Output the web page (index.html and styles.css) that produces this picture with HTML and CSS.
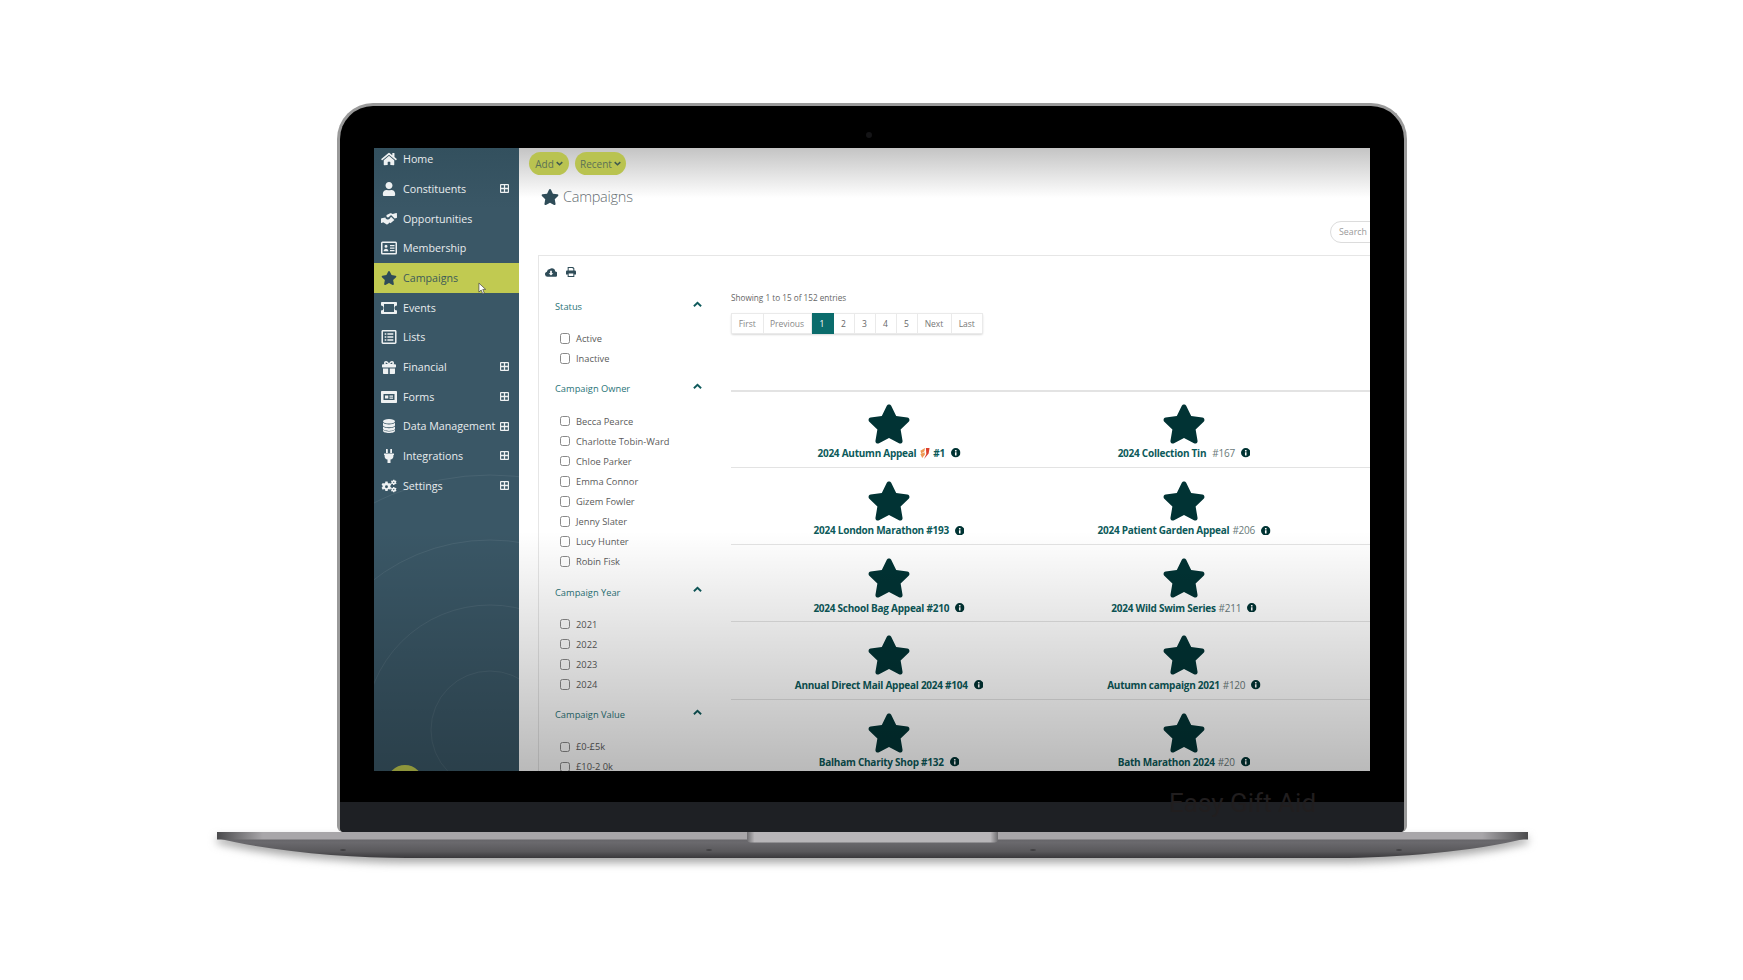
FILE: index.html
```html
<!DOCTYPE html>
<html lang="en">
<head>
<meta charset="utf-8">
<title>Campaigns</title>
<link rel="stylesheet" href="styles.css">
</head>
<body>
<svg class="defs" width="0" height="0" aria-hidden="true">
  <symbol id="i-star" viewBox="0 0 576 512"><path d="M259.3 17.8L194 150.2 47.9 171.5c-26.2 3.8-36.7 36.1-17.7 54.6l105.7 103-25 145.5c-4.5 26.3 23.2 46 46.4 33.7L288 439.6l130.7 68.7c23.2 12.2 50.9-7.4 46.4-33.7l-25-145.5 105.7-103c19-18.5 8.5-50.8-17.7-54.6L382 150.2 316.7 17.8c-11.7-23.6-45.6-23.9-57.4 0z"/></symbol>
  <symbol id="i-home" viewBox="0 0 576 512"><path d="M280.37 148.26L96 300.11V464a16 16 0 0 0 16 16l112.06-.29a16 16 0 0 0 15.92-16V368a16 16 0 0 1 16-16h64a16 16 0 0 1 16 16v95.64a16 16 0 0 0 16 16.05L464 480a16 16 0 0 0 16-16V300L295.67 148.26a12.19 12.19 0 0 0-15.3 0zM571.6 251.47L488 182.56V44.05a12 12 0 0 0-12-12h-56a12 12 0 0 0-12 12v72.61L318.47 43a48 48 0 0 0-61 0L4.34 251.47a12 12 0 0 0-1.6 16.9l25.5 31A12 12 0 0 0 45.15 301l235.22-193.74a12.19 12.19 0 0 1 15.3 0L530.9 301a12 12 0 0 0 16.9-1.6l25.5-31a12 12 0 0 0-1.7-16.93z"/></symbol>
  <symbol id="i-user" viewBox="0 0 448 512"><path d="M224 256c70.7 0 128-57.3 128-128S294.7 0 224 0 96 57.3 96 128s57.3 128 128 128zm89.6 32h-16.7c-22.2 10.2-46.9 16-72.9 16s-50.6-5.8-72.9-16h-16.7C60.2 288 0 348.2 0 422.4V464c0 26.5 21.5 48 48 48h352c26.5 0 48-21.5 48-48v-41.6c0-74.2-60.2-134.4-134.4-134.4z"/></symbol>
  <symbol id="i-hands" viewBox="0 0 16 12"><path d="M5.600 1.900 8.700.4c.6-.3 1.300-.3 1.900 0l1.100.6L15.200 0c.3 0 .6.100.7.400l.1 3.800c0 .3-.2.600-.5.700l-1.900.6-3-3.100c-.3-.3-.8-.3-1.100 0L7.900 4.100c-.7.600-1.700.4-2.200-.3-.4-.6-.4-1.300-.1-1.900zM10 3.700l3.400 3.400-3.900 3.100-.8-.7-1.700 1.600c-.5.500-1.200.4-1.700.1L2.200 9.300.6 9.900C.3 10 0 9.800 0 9.400V6c0-.4.200-.6.500-.7l3.900-.9c.1 1 .9 1.800 2 2 1 .2 1.900-.2 2.500-.9L10 3.700z"/></symbol>
  <symbol id="i-idcard" viewBox="0 0 16 13"><path fill-rule="evenodd" d="M1.500 0h13A1.500 1.500 0 0 1 16 1.500v10a1.500 1.500 0 0 1-1.500 1.500h-13A1.500 1.500 0 0 1 0 11.500v-10A1.500 1.500 0 0 1 1.500 0zM1.500 1.500v10h13v-10h-13zM5 3.200a1.500 1.500 0 1 1 0 3 1.500 1.500 0 0 1 0-3zM2.600 9.700c0-1.500 1-2.500 2.400-2.500s2.400 1 2.400 2.500H2.600zM9 3.500h4.500v1.300H9zM9 6h4.500v1.300H9zM9 8.400h4.500v1.300H9z"/></symbol>
  <symbol id="i-ticket" viewBox="0 0 16 12"><path fill-rule="evenodd" d="M.8 0h14.400c.4 0 .8.400.8.800v2.700a2.500 2.500 0 0 0 0 5v2.700c0 .4-.4.800-.8.800H.8c-.4 0-.8-.4-.8-.8V8.500a2.500 2.500 0 0 0 0-5V.8C0 .4.400 0 .8 0zM3 2v8h10V2H3z"/></symbol>
  <symbol id="i-list" viewBox="0 0 14 13"><path fill-rule="evenodd" d="M1.300 0h11.400C13.400 0 14 .6 14 1.300v10.400c0 .7-.6 1.300-1.300 1.300H1.300C.6 13 0 12.400 0 11.700V1.300C0 .6.600 0 1.300 0zM1.400 1.400v10.200h11.200V1.400H1.400zM3 3h1.500v1.400H3zM5.500 3H11v1.400H5.500zM3 5.800h1.500v1.400H3zM5.500 5.800H11v1.400H5.500zM3 8.600h1.500V10H3zM5.500 8.600H11V10H5.500z"/></symbol>
  <symbol id="i-gift" viewBox="0 0 14 14"><path d="M1 8.500h5.200V14H2c-.6 0-1-.4-1-1V8.500zm6.800 0H13V13c0 .6-.4 1-1 1H7.800V8.500zM4 1c1.400 0 2.300 1.100 3 2.400C7.700 2.100 8.600 1 10 1c1.200 0 2 .8 2 1.900 0 .5-.1.900-.4 1.300h1.500c.5 0 .9.400.9.900v1.700c0 .4-.3.700-.7.700H.7C.3 7.500 0 7.200 0 6.800V5.100c0-.5.400-.9.900-.9h1.500C2.100 3.800 2 3.400 2 2.900 2 1.800 2.800 1 4 1zm0 1.500c-.3 0-.5.200-.5.500 0 .5.400 1 1 1h1.400C5.300 3 4.700 2.500 4 2.500zm6 0c-.7 0-1.300.5-1.900 1.500h1.400c.6 0 1-.5 1-1 0-.3-.2-.5-.5-.5z"/></symbol>
  <symbol id="i-form" viewBox="0 0 16 12"><path fill-rule="evenodd" d="M1 0h14c.6 0 1 .4 1 1v10c0 .6-.4 1-1 1H1c-.6 0-1-.4-1-1V1c0-.6.400-1 1-1zM2.500 3v6h11V3h-11zM4 4.500h3.300v3H4zM8.500 4.500H12v1.200H8.500zM8.500 6.500H12v1.200H8.500z"/></symbol>
  <symbol id="i-db" viewBox="0 0 12 14"><ellipse cx="6" cy="2.300" rx="6" ry="2.300"/><path d="M0 3.800C1.200 5 3.600 5.500 6 5.500s4.800-.5 6-1.700v2.400C12 7.400 9.300 8.300 6 8.300S0 7.400 0 6.200V3.800zM0 7.500C1.200 8.600 3.600 9.200 6 9.200s4.800-.6 6-1.700v2.300c0 1.200-2.700 2.100-6 2.100s-6-.9-6-2.100V7.500zM0 10.800C1.200 12 3.600 12.500 6 12.500s4.800-.5 6-1.700v.9C12 13 9.300 14 6 14s-6-1-6-2.300v-.9z"/></symbol>
  <symbol id="i-plug" viewBox="0 0 10 14"><path d="M2 0h1.300c.3 0 .5.200.5.500V4H2V0zM6.500 0H8v4H6.200V.5c0-.3.100-.5.300-.5zM.4 4.500h9.200c.2 0 .4.200.4.400v.8c0 .2-.2.400-.4.400h-.2v1.100c0 1.700-1.200 3.100-2.900 3.400V14H3.500v-3.400C1.800 10.300.6 8.900.6 7.200V6.100H.4C.2 6.100 0 5.900 0 5.700v-.8c0-.2.200-.4.400-.4z"/></symbol>
  <symbol id="i-cogs" viewBox="0.500 0.500 16.500 13">
    <path fill-rule="evenodd" d="M5 2.400h2.300l.3 1.500c.4.100.7.300 1 .5l1.400-.6 1.200 1.900-1.100 1c.1.400.1.800 0 1.200l1.100 1-1.200 1.900-1.400-.6c-.3.200-.6.400-1 .5l-.3 1.500H5l-.3-1.500c-.4-.1-.7-.3-1-.5l-1.400.6-1.200-1.900 1.100-1a3 3 0 0 1 0-1.200l-1.100-1 1.200-1.900 1.400.6c.3-.2.600-.4 1-.5L5 2.400zM6.150 6.200a1.500 1.500 0 1 0 0 3 1.500 1.500 0 0 0 0-3z"/>
    <path fill-rule="evenodd" d="M13 .5h1.300l.2.800.6.300.8-.3.600 1-.6.600v.6l.6.600-.6 1-.8-.3-.6.300-.2.800H13l-.2-.8-.6-.3-.8.300-.6-1 .6-.6v-.6l-.6-.6.600-1 .8.300.6-.3L13 .5zm.65 2a.7.700 0 1 0 0 1.400.7.700 0 0 0 0-1.400zM13 8h1.300l.2.800.6.300.8-.3.600 1-.6.600v.6l.6.600-.6 1-.8-.3-.6.300-.2.800H13l-.2-.8-.6-.3-.8.300-.6-1 .6-.6v-.6l-.6-.6.600-1 .8.300.6-.3L13 8zm.65 2a.7.700 0 1 0 0 1.400.7.700 0 0 0 0-1.400z"/>
  </symbol>
  <symbol id="i-plus" viewBox="0 0 10 10"><path fill-rule="evenodd" d="M1 0h8c.6 0 1 .4 1 1v8c0 .6-.4 1-1 1H1c-.6 0-1-.4-1-1V1c0-.6.400-1 1-1zM1.300 1.300v3h3v-3h-3zM5.700 1.300v3h3v-3h-3zM1.300 5.700v3h3v-3h-3zM5.700 5.700v3h3v-3h-3z"/></symbol>
  <symbol id="i-up" viewBox="0 0 10 7"><path d="M1 5.500 5 1.700l4 3.800" fill="none" stroke="currentColor" stroke-width="2.100"/></symbol>
  <symbol id="i-down" viewBox="0 0 10 7"><path d="M1 1.500 5 5.300l4-3.800" fill="none" stroke="currentColor" stroke-width="2.200"/></symbol>
  <symbol id="i-cloud" viewBox="0 0 14 11"><path fill-rule="evenodd" d="M3 11a3 3 0 0 1-.8-5.900A3.600 3.600 0 0 1 5.600 2 4 4 0 0 1 12 4.800 3.100 3.100 0 0 1 11 11H3zM6 4v3H4.300L7 9.700 9.700 7H8V4H6z"/></symbol>
  <symbol id="i-print" viewBox="0 0 12 12"><path fill-rule="evenodd" d="M2 0h6.500L10 1.500V4.200h.5c.8 0 1.500.7 1.500 1.500V9h-2v3H2V9H0V5.700c0-.8.700-1.500 1.500-1.500H2V0zm1.200 1.200v3h5.600V2H8V1.200H3.200zm0 6.500v3.100h5.600V7.700H3.200z"/></symbol>
  <symbol id="i-info" viewBox="0 0 12 12"><path fill-rule="evenodd" d="M6 0a6 6 0 1 1 0 12A6 6 0 0 1 6 0zM5 2.500v1.800h2V2.500H5zM5 5.300v4.200h2V5.300H5z"/></symbol>
  <symbol id="i-ribbon" viewBox="0 0 12 12"><path fill="#ee9a55" d="M1.500 3 6.500 0 6 3.500 2.500 6zM1.500 6.500 6 4.500l.5 2.500-3 4z"/><path fill="#dc3e2c" d="M7.500 0H11.500L10.500 6 5.500 12 8 6.500z"/></symbol>
</svg>

<div class="device">
  <div class="lid">
    <span class="camera"></span>
    <div class="screen">
      <nav class="sidebar">
        <svg class="rings" viewBox="0 0 145 623" aria-hidden="true">
          <g fill="none" stroke="#fff" stroke-opacity=".07">
            <circle cx="116" cy="582" r="59"/>
            <circle cx="116" cy="582" r="125"/>
            <circle cx="116" cy="582" r="190"/>
            <circle cx="116" cy="582" r="255"/>
          </g>
          <circle cx="31" cy="635" r="18" fill="#c2cc50"/>
        </svg>
        <ul class="menu">
          <li class="row"><svg class="ico"><use href="#i-home"/></svg><span>Home</span></li>
          <li class="row"><svg class="ico"><use href="#i-user"/></svg><span>Constituents</span><svg class="plus"><use href="#i-plus"/></svg></li>
          <li class="row"><svg class="ico"><use href="#i-hands"/></svg><span>Opportunities</span></li>
          <li class="row"><svg class="ico"><use href="#i-idcard"/></svg><span>Membership</span></li>
          <li class="row active"><svg class="ico"><use href="#i-star"/></svg><span>Campaigns</span></li>
          <li class="row"><svg class="ico"><use href="#i-ticket"/></svg><span>Events</span></li>
          <li class="row"><svg class="ico"><use href="#i-list"/></svg><span>Lists</span></li>
          <li class="row"><svg class="ico"><use href="#i-gift"/></svg><span>Financial</span><svg class="plus"><use href="#i-plus"/></svg></li>
          <li class="row"><svg class="ico"><use href="#i-form"/></svg><span>Forms</span><svg class="plus"><use href="#i-plus"/></svg></li>
          <li class="row"><svg class="ico"><use href="#i-db"/></svg><span>Data Management</span><svg class="plus"><use href="#i-plus"/></svg></li>
          <li class="row"><svg class="ico"><use href="#i-plug"/></svg><span>Integrations</span><svg class="plus"><use href="#i-plus"/></svg></li>
          <li class="row"><svg class="ico"><use href="#i-cogs"/></svg><span>Settings</span><svg class="plus"><use href="#i-plus"/></svg></li>
        </ul>
      </nav>
      <main class="main">
        <div class="topbar">
          <button class="pill pill-add">Add <svg class="caret"><use href="#i-down"/></svg></button>
          <button class="pill pill-recent">Recent <svg class="caret"><use href="#i-down"/></svg></button>
        </div>
        <h1 class="title"><svg class="title-star"><use href="#i-star"/></svg>Campaigns</h1>
        <div class="search">Search</div>
        <section class="card">
          <aside class="filters">
            <div class="tools">
              <svg class="tool-cloud"><use href="#i-cloud"/></svg>
              <svg class="tool-print"><use href="#i-print"/></svg>
            </div>
            <div class="group">
              <div class="group-head"><span>Status</span><svg class="chev"><use href="#i-up"/></svg></div>
              <label class="opt"><input type="checkbox">Active</label>
              <label class="opt"><input type="checkbox">Inactive</label>
            </div>
            <div class="group">
              <div class="group-head"><span>Campaign Owner</span><svg class="chev"><use href="#i-up"/></svg></div>
              <label class="opt"><input type="checkbox">Becca Pearce</label>
              <label class="opt"><input type="checkbox">Charlotte Tobin-Ward</label>
              <label class="opt"><input type="checkbox">Chloe Parker</label>
              <label class="opt"><input type="checkbox">Emma Connor</label>
              <label class="opt"><input type="checkbox">Gizem Fowler</label>
              <label class="opt"><input type="checkbox">Jenny Slater</label>
              <label class="opt"><input type="checkbox">Lucy Hunter</label>
              <label class="opt"><input type="checkbox">Robin Fisk</label>
            </div>
            <div class="group">
              <div class="group-head"><span>Campaign Year</span><svg class="chev"><use href="#i-up"/></svg></div>
              <label class="opt"><input type="checkbox">2021</label>
              <label class="opt"><input type="checkbox">2022</label>
              <label class="opt"><input type="checkbox">2023</label>
              <label class="opt"><input type="checkbox">2024</label>
            </div>
            <div class="group">
              <div class="group-head"><span>Campaign Value</span><svg class="chev"><use href="#i-up"/></svg></div>
              <label class="opt"><input type="checkbox">£0-£5k</label>
              <label class="opt"><input type="checkbox">£10-2 0k</label>
            </div>
          </aside>
          <div class="results">
            <p class="showing">Showing 1 to 15 of 152 entries</p>
            <div class="pager">
              <a class="pg pg-first">First</a><a class="pg pg-prev">Previous</a><a class="pg pg-num current">1</a><a class="pg pg-num">2</a><a class="pg pg-num">3</a><a class="pg pg-num">4</a><a class="pg pg-num">5</a><a class="pg pg-next">Next</a><a class="pg pg-last">Last</a>
            </div>
            <div class="list">
              <div class="list-row">
                <div class="item"><svg class="big-star"><use href="#i-star"/></svg><div class="name">2024 Autumn Appeal <svg class="ribbon"><use href="#i-ribbon"/></svg> #1<svg class="info"><use href="#i-info"/></svg></div></div>
                <div class="item"><svg class="big-star"><use href="#i-star"/></svg><div class="name">2024 Collection Tin <span class="ref ref-gap">#167</span><svg class="info"><use href="#i-info"/></svg></div></div>
              </div>
              <div class="list-row">
                <div class="item"><svg class="big-star"><use href="#i-star"/></svg><div class="name">2024 London Marathon #193<svg class="info"><use href="#i-info"/></svg></div></div>
                <div class="item"><svg class="big-star"><use href="#i-star"/></svg><div class="name">2024 Patient Garden Appeal <span class="ref">#206</span><svg class="info"><use href="#i-info"/></svg></div></div>
              </div>
              <div class="list-row">
                <div class="item"><svg class="big-star"><use href="#i-star"/></svg><div class="name">2024 School Bag Appeal #210<svg class="info"><use href="#i-info"/></svg></div></div>
                <div class="item"><svg class="big-star"><use href="#i-star"/></svg><div class="name">2024 Wild Swim Series <span class="ref">#211</span><svg class="info"><use href="#i-info"/></svg></div></div>
              </div>
              <div class="list-row">
                <div class="item"><svg class="big-star"><use href="#i-star"/></svg><div class="name">Annual Direct Mail Appeal 2024 #104<svg class="info"><use href="#i-info"/></svg></div></div>
                <div class="item"><svg class="big-star"><use href="#i-star"/></svg><div class="name">Autumn campaign 2021 <span class="ref">#120</span><svg class="info"><use href="#i-info"/></svg></div></div>
              </div>
              <div class="list-row">
                <div class="item"><svg class="big-star"><use href="#i-star"/></svg><div class="name">Balham Charity Shop #132<svg class="info"><use href="#i-info"/></svg></div></div>
                <div class="item"><svg class="big-star"><use href="#i-star"/></svg><div class="name">Bath Marathon 2024 <span class="ref">#20</span><svg class="info"><use href="#i-info"/></svg></div></div>
              </div>
            </div>
          </div>
        </section>
      </main>
      <div class="shade"></div>
      <svg class="cursor" viewBox="0 0 10 14" aria-hidden="true"><path d="M1 1v10l2.500-2.300L5.300 13l1.700-.8L5.300 8h3.200z" fill="#fff" stroke="#333" stroke-width=".7"/></svg>
    </div>
    <div class="chin"></div>
    <div class="watermark">Easy Gift Aid</div>
  </div>
  <svg class="base" viewBox="0 0 1311 40" aria-hidden="true">
    <defs>
      <linearGradient id="g-strip" x1="0" x2="1" y1="0" y2="0">
        <stop offset="0" stop-color="#4a4a4c"/><stop offset=".035" stop-color="#a8a6a9"/>
        <stop offset=".965" stop-color="#a8a6a9"/><stop offset="1" stop-color="#4a4a4c"/>
      </linearGradient>
      <linearGradient id="g-body" x1="0" x2="0" y1="0" y2="1">
        <stop offset="0" stop-color="#5e5d60"/><stop offset=".4" stop-color="#6a696d"/>
        <stop offset=".75" stop-color="#59585b"/><stop offset="1" stop-color="#3a393c"/>
      </linearGradient>
      <linearGradient id="g-notch" x1="0" x2="1" y1="0" y2="0">
        <stop offset="0" stop-color="#6e6d70"/><stop offset=".03" stop-color="#b8b6b9"/>
        <stop offset=".97" stop-color="#b8b6b9"/><stop offset="1" stop-color="#6e6d70"/>
      </linearGradient>
      <filter id="f-blur" x="-5%" y="-50%" width="110%" height="250%"><feGaussianBlur stdDeviation="4"/></filter>
    </defs>
    <path d="M0 6C50 19 130 26 190 26H1120C1180 26 1260 19 1311 6V0H0z" transform="translate(0 5)" fill="#a8a8a8" filter="url(#f-blur)"/>
    <path d="M0 6C50 19 130 26 190 26H1120C1180 26 1260 19 1311 6V0H0z" fill="url(#g-body)"/>
    <rect width="1311" height="7.500" fill="url(#g-strip)"/>
    <path d="M530 0H781V7C781 10 779 10.500 775 10.500H536C532 10.500 530 10 530 7z" fill="url(#g-notch)"/>
    <g fill="#38373a"><ellipse cx="126" cy="18" rx="3" ry=".8"/><ellipse cx="492" cy="18" rx="3" ry=".8"/><ellipse cx="816" cy="18" rx="3" ry=".8"/><ellipse cx="1182" cy="18" rx="3" ry=".8"/></g>
  </svg>
</div>
</body>
</html>
```
FILE: styles.css
```css
* { box-sizing: border-box; }
html, body { margin: 0; height: 100%; }
body { background: #fff; overflow: hidden; font-family: "Open Sans", "Liberation Sans", sans-serif; }
.defs { position: absolute; }

.device { width: 1311px; margin: 103px 0 0 217px; }
.lid {
  position: relative; width: 1070px; height: 729px; margin-left: 120px;
  padding: 42px 34px 0; background: #000;
  border: 3px solid #9a9a9a; border-bottom: 0; border-radius: 36px 36px 6px 6px;
}
.camera { position: absolute; top: 26px; left: 526px; width: 6px; height: 6px; border-radius: 50%; background: #141416; }
.screen { position: relative; display: flex; width: 996px; height: 623px; overflow: hidden; background: #fff; }
.chin { height: 30px; margin: 31px -34px 0; background: #1e2024; border-radius: 0 0 4px 4px; }
.watermark { position: absolute; left: 829px; top: 682px; font: 400 26px/30px Roboto, sans-serif; color: #211e1f; white-space: nowrap; }
.base { display: block; width: 1311px; height: 40px; overflow: visible; }

.sidebar { position: relative; flex: 0 0 145px; background: linear-gradient(#33505e, #3a5766 60px); overflow: hidden; }
.rings { position: absolute; left: 0; top: 0; width: 145px; height: 623px; }
.menu { position: relative; list-style: none; margin: -3.500px 0 0; padding: 0; }
.row { display: flex; align-items: center; height: 29.67px; padding: 0 10px 0 7px; color: #e8ecee; font-size: 10.700px; white-space: nowrap; }
.row .ico { flex: 0 0 16px; width: 16px; height: 14px; margin-right: 6px; fill: #eef1f2; }
.row .plus { width: 9px; height: 9px; margin-left: auto; fill: #eef1f2; }
.row.active { background: #c1ca51; color: #3d5b58; }
.row.active .ico { fill: #2f4c58; }

.main { flex: 1; min-width: 0; display: flex; flex-direction: column; padding-top: 4px; background: linear-gradient(#c4c4c4, #fff 50px); color: #555; }
.topbar { display: flex; gap: 6px; margin-left: 10px; height: 23px; }
.pill { display: flex; align-items: center; justify-content: center; gap: 2px; height: 23px; padding: 0; border: 0; border-radius: 12px; background: #b9c350; color: #5b7155; font: 400 10px "Open Sans", sans-serif; }
.pill-add { width: 40px; }
.pill-recent { width: 51px; }
.caret { width: 7px; height: 5px; color: #3f5a4e; }
.title { display: flex; align-items: center; height: 24px; margin: 9.500px 0 0 22px; font-size: 14.500px; font-weight: 300; color: #666e72; letter-spacing: -.25px; }
.title-star { width: 18px; height: 16px; margin-right: 4px; fill: #2f4c58; }
.search { align-self: flex-end; width: 60px; height: 22px; margin: 12.500px -20px 0 0; padding-left: 8px; border: 1px solid #dcdcdc; border-radius: 11px; font-size: 8.800px; line-height: 20px; color: #9a9a9a; }

.card { display: flex; flex: 1; min-height: 0; margin: 12px 0 0 19px; border: solid #e6e6e6; border-width: 1px 0 0 1px; }
.filters { flex: 0 0 192px; padding: 0 30px 0 16px; }
.tools { display: flex; align-items: center; gap: 9px; height: 31px; margin: 0 0 9.500px -10px; }
.tool-cloud { width: 12px; height: 10px; fill: #2f4c58; }
.tool-print { width: 10px; height: 10px; fill: #2f4c58; }
.group { margin-bottom: 10.300px; }
.group-head { display: flex; align-items: center; justify-content: space-between; height: 20px; margin-bottom: 12px; font-size: 9.300px; color: #2a7478; }
.chev { width: 9px; height: 7px; margin: -5px -1px 0 0; color: #0f5a5c; }
.opt { display: flex; align-items: center; height: 20.100px; font-size: 9.300px; color: #5a5a5a; white-space: nowrap; }
.opt input { appearance: none; width: 10.500px; height: 10.500px; margin: 0 6px 0 4.500px; border: 1px solid #8a8a8a; border-radius: 2.500px; background: transparent; }

.results { flex: 1; min-width: 0; padding-top: 35px; }
.showing { margin: 0; height: 14px; font-size: 8.200px; line-height: 14px; color: #666; white-space: nowrap; }
.pager { display: inline-flex; height: 21px; margin-top: 8px; vertical-align: top; border-radius: 2px; box-shadow: 0 1px 2px rgba(0,0,0,.15); }
.pg { display: flex; align-items: center; justify-content: center; border: 1px solid #eaeaea; border-left: 0; font-size: 8.500px; color: #777; }
.pg-first { width: 32.500px; border-left: 1px solid #eaeaea; color: #888; }
.pg-prev { width: 48px; color: #888; }
.pg-num { width: 21px; color: #666; }
.pg-next { width: 34px; }
.pg-last { width: 31.500px; }
.pg.current { width: 22px; background: #0b6c6c; border-color: #0b6c6c; color: #fff; }
.list { margin-top: 55.500px; }
.list-row { display: grid; grid-template-columns: 316px 274px; height: 77.300px; padding-top: 13px; border-top: 1px solid #e3e3e3; }
.list-row:first-child { padding-top: 12px; border-top-width: 2px; }
.item { display: flex; flex-direction: column; align-items: center; }
.big-star { width: 44px; height: 40px; fill: #013334; flex: none; }
.name { display: flex; align-items: center; gap: 3px; height: 13px; margin-top: 3px; font-size: 10px; letter-spacing: -.25px; font-weight: 700; color: #0c5a5a; white-space: nowrap; }
.ref { font-weight: 400; color: #6a7a7a; }
.ref-gap { margin-left: 3px; }
.ribbon { width: 11px; height: 11px; }
.info { width: 9.500px; height: 9.500px; margin-left: 3px; fill: #033; }

.shade { position: absolute; inset: 0; pointer-events: none; background: linear-gradient(to top, rgba(0,0,0,.27), rgba(0,0,0,0) 240px); }
.cursor { position: absolute; left: 104px; top: 134px; width: 9px; height: 13px; }
```
